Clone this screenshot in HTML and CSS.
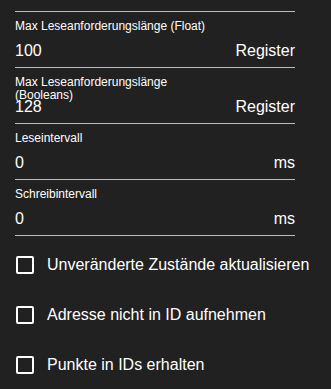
FILE: index.html
```html
<!DOCTYPE html>
<html lang="de">
<head>
  <meta charset="UTF-8" />
  <title>Einstellungen</title>
  <link rel="stylesheet" href="styles.css">
</head>
<body>
  <div class="form">
    <div class="field">
      <label class="field-label">Max Leseanforderungslänge (Coils)</label>
      <div class="field-input"><span>0</span><span class="unit">ms</span></div>
    </div>

    <div class="field">
      <label class="field-label">Max Leseanforderungslänge (Float)</label>
      <div class="field-input"><span>100</span><span class="unit">Register</span></div>
    </div>

    <div class="field">
      <label class="field-label">Max Leseanforderungslänge (Booleans)</label>
      <div class="field-input"><span>128</span><span class="unit">Register</span></div>
    </div>

    <div class="field">
      <label class="field-label">Leseintervall</label>
      <div class="field-input"><span>0</span><span class="unit">ms</span></div>
    </div>

    <div class="field">
      <label class="field-label">Schreibintervall</label>
      <div class="field-input"><span>0</span><span class="unit">ms</span></div>
    </div>

    <div class="options">
      <label class="check-row"><span class="check-box"></span>Unveränderte Zustände aktualisieren</label>
      <label class="check-row"><span class="check-box"></span>Adresse nicht in ID aufnehmen</label>
      <label class="check-row"><span class="check-box"></span>Punkte in IDs erhalten</label>
    </div>
  </div>
</body>
</html>
```

FILE: styles.css
```css
* {
  margin: 0;
  padding: 0;
  box-sizing: border-box;
  font-family: "Liberation Sans", Arial, sans-serif;
}

html, body {
  background: #212121;
  color: #fff;
  overflow: hidden;
}

.form {
  margin-top: -44px;
  padding-left: 15px;
}

.field {
  width: 280px;
  padding: 8px 0 6px;
  border-bottom: 1px solid #bcbcbc;
}

.field-label {
  display: block;
  height: 21px;
  max-width: 210px;
  font-size: 12px;
  line-height: 13px;
}

.field-input {
  display: flex;
  justify-content: space-between;
  font-size: 16px;
  line-height: 20px;
}

.options {
  margin-top: 4px;
}

.check-row {
  display: flex;
  align-items: center;
  gap: 13px;
  height: 50px;
  padding-left: 1px;
  font-size: 16px;
  white-space: nowrap;
}

.check-box {
  flex: none;
  width: 18px;
  height: 18px;
  border: 2px solid #fff;
  border-radius: 2px;
}
```
